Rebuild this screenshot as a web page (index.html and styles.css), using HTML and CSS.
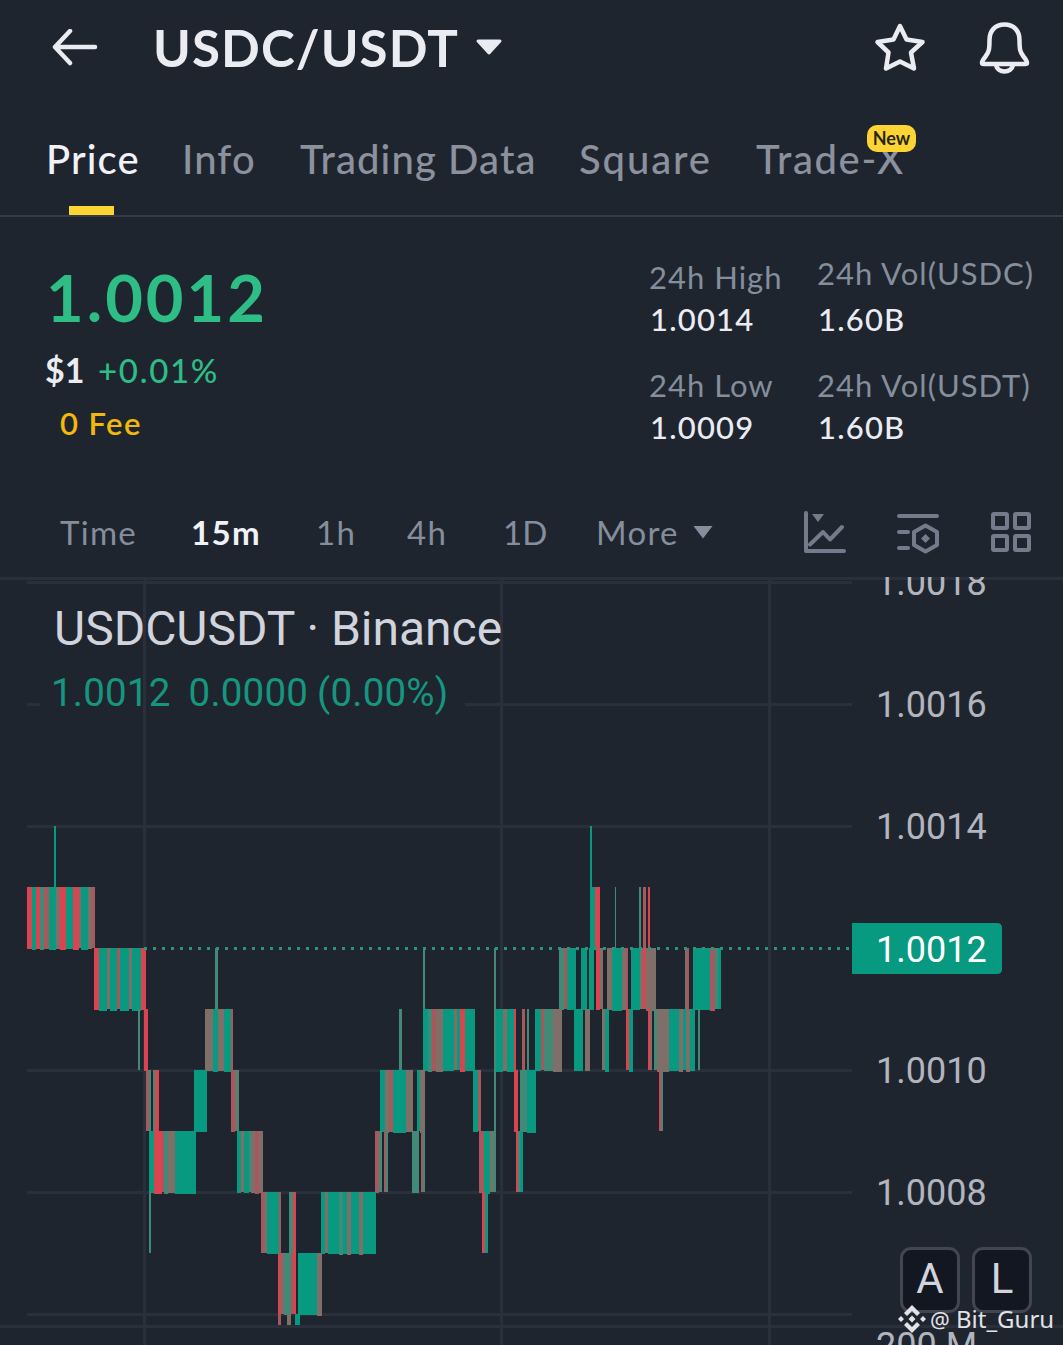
FILE: index.html
```html
<!DOCTYPE html>
<html lang="en">
<head>
    <meta charset="UTF-8">
    <meta name="viewport" content="width=device-width, initial-scale=1.0">
    <title>USDC/USDT</title>
    <link rel="stylesheet" href="styles.css">
</head>
<body>
    <header class="header">
        <svg class="back" width="46" height="38" viewBox="0 0 46 38">
            <path d="M18 2L3 18L18 34M3 18H43" />
        </svg>
        <h1 class="pair">USDC/USDT</h1>
        <svg class="pair-arrow" width="28" height="20" viewBox="0 0 28 20">
            <path d="M3 3H25L14 15Z" />
        </svg>
        <div class="header-icons">
            <svg width="54" height="54" viewBox="0 0 54 54">
                <path d="M27 6L33.500 19.500L49.500 22L38 32.500L41 48.500L27 41.500L13 48.500L15.500 32.500L4.500 22L20.500 19.500Z" />
            </svg>
            <svg width="54" height="56" viewBox="0 0 54 56">
                <path d="M26.500 4.500C17 4.500 11.500 11 11.500 20C11.500 29 11 32 7.500 36.500C5 39.500 4 41 4 43Q4 44 6 44H47Q49 44 49 43C49 41 48 39.500 45.500 36.500C42 32 41.500 29 41.500 20C41.500 11 36 4.500 26.500 4.500Z" />
                <path d="M18 45C19.500 53.500 33.500 53.500 35 45" />
            </svg>
        </div>
    </header>

    <nav class="tabs">
        <a class="active">Price</a>
        <a>Info</a>
        <a class="trading">Trading Data</a>
        <a class="square">Square</a>
        <a class="tradex">Trade-X<span class="badge">New</span></a>
    </nav>

    <section class="summary">
        <div class="price-block">
            <div class="price">1.0012</div>
            <div class="change"><span class="usd">$1</span><span class="percent">+0.01%</span></div>
            <div class="fee">0 Fee</div>
        </div>
        <div class="stats">
            <div class="stat">
                <div class="label">24h High</div>
                <div class="value">1.0014</div>
            </div>
            <div class="stat raised">
                <div class="label">24h Vol(USDC)</div>
                <div class="value">1.60B</div>
            </div>
            <div class="stat">
                <div class="label">24h Low</div>
                <div class="value">1.0009</div>
            </div>
            <div class="stat">
                <div class="label">24h Vol(USDT)</div>
                <div class="value">1.60B</div>
            </div>
        </div>
    </section>

    <div class="intervals">
        <a>Time</a>
        <a class="active">15m</a>
        <a>1h</a>
        <a>4h</a>
        <a class="day">1D</a>
        <a class="more">More
            <svg width="22" height="15" viewBox="0 0 22 15"><path d="M1.500 1H20.500L11 13.500Z" /></svg>
        </a>
        <div class="tools">
            <svg width="44" height="44" viewBox="0 0 44 44">
                <path d="M3 3V41H41M7 34.500L20 22L27 29.500L39 17" />
                <path class="solid" d="M9 4H21L15 12Z" />
            </svg>
            <svg width="44" height="44" viewBox="0 0 44 44">
                <path d="M3 6H41M3 22H12M3 38H12M29.500 15.500L41 22V35L29.500 41.500L18 35V22Z" />
                <path class="solid" d="M29.500 24L34 28.500L29.500 33L25 28.500Z" />
            </svg>
            <svg width="44" height="44" viewBox="0 0 44 44">
                <rect x="4" y="4" width="14" height="14" rx="1" />
                <rect x="26" y="4" width="14" height="14" rx="1" />
                <rect x="4" y="26" width="14" height="14" rx="1" />
                <rect x="26" y="26" width="14" height="14" rx="1" />
            </svg>
        </div>
    </div>

    <main class="chart">
        <svg width="1063" height="768" viewBox="0 577 1063 768">
            <g id="grid" class="grid"></g>
            <g id="candles" shape-rendering="crispEdges"></g>
            <path class="last-line" d="M144 948.500H852" />
            <rect class="text-mask" x="40" y="588" width="425" height="132" />
            <path class="grid-over" d="M144.500 588V720" />
            <g id="axis" class="axis"></g>
            <path class="last-tag" d="M852 923H997Q1002 923 1002 928V969Q1002 974 997 974H852Z" />
            <text class="last-text" x="876" y="962">1.0012</text>
        </svg>
        <div class="legend">
            <div class="legend-title">USDCUSDT · Binance</div>
            <div class="legend-values"><span>1.0012</span><span>0.0000</span><span>(0.00%)</span></div>
        </div>
        <div class="scale-buttons">
            <button>A</button>
            <button>L</button>
        </div>
        <div class="watermark">
            <svg width="28" height="28" viewBox="0 0 28 28">
                <path d="M14 0L22 8L19 11L14 6L9 11L6 8ZM14 28L22 20L19 17L14 22L9 17L6 20ZM3 11L6 14L3 17L0 14ZM25 11L28 14L25 17L22 14ZM14 10.500L17.500 14L14 17.500L10.500 14Z" />
            </svg>
            <span class="at">@</span>
            <span>Bit_Guru</span>
        </div>
    </main>

    <script src="chart.js"></script>
</body>
</html>
```
FILE: styles.css
```css
* {
    margin: 0;
    padding: 0;
    box-sizing: border-box;
}

body {
    width: 1063px;
    height: 1345px;
    overflow: hidden;
    background-color: #1f252f;
    color: #eaecf2;
    font-family: Lato, "Liberation Sans", sans-serif;
}

svg {
    display: block;
    fill: none;
}

.header {
    display: flex;
    align-items: center;
    height: 96px;
    padding: 0 31px 0 52px;
}

.header svg {
    stroke: #eaecf2;
    stroke-width: 4;
    stroke-linecap: round;
    stroke-linejoin: round;
}

.header .back,
.header-icons svg {
    stroke-width: 4.5;
}

.pair {
    width: 304px;
    margin-left: 55px;
    font-size: 51px;
    font-weight: 700;
    letter-spacing: 1.1px;
    line-height: 96px;
    white-space: nowrap;
}

.header .pair-arrow {
    margin-left: 18px;
    fill: #eaecf2;
    stroke-width: 3;
}

.header-icons {
    display: flex;
    gap: 51px;
    margin-left: auto;
}

.tabs {
    display: grid;
    grid-template-columns: 136px 118px 279px 177px 200px;
    height: 121px;
    padding: 36px 0 0 46px;
    border-bottom: 2px solid #333a45;
    font-size: 40px;
    font-weight: 500;
    letter-spacing: 1.1px;
    line-height: 55px;
    color: #8b919d;
    white-space: nowrap;
}

.tabs a {
    position: relative;
}

.tabs .square {
    letter-spacing: 1.9px;
}

.tabs .tradex {
    letter-spacing: 1.6px;
}

.tabs .active {
    color: #f0f2f7;
}

.tabs .active::after {
    content: "";
    position: absolute;
    left: 23px;
    bottom: 0;
    width: 45px;
    height: 9px;
    background-color: #fcd535;
}

.badge {
    position: absolute;
    left: 111px;
    top: -7px;
    width: 49px;
    height: 27px;
    border-radius: 10px;
    background-color: #fcd535;
    color: #29250f;
    font-size: 18px;
    font-weight: 700;
    letter-spacing: 0;
    line-height: 27px;
    text-align: center;
}

.summary {
    display: flex;
    justify-content: space-between;
    height: 273px;
    padding: 39px 0 0 46px;
}

.price {
    height: 84px;
    font-size: 65px;
    font-weight: 700;
    letter-spacing: 3px;
    line-height: 82px;
    color: #2ebd85;
}

.change {
    display: flex;
    height: 58px;
    line-height: 60px;
}

.usd {
    width: 53px;
    margin-left: -1px;
    font-size: 34px;
    font-weight: 700;
}

.percent {
    font-size: 33px;
    font-weight: 500;
    letter-spacing: 1.7px;
    color: #2ebd85;
}

.fee {
    padding-left: 14px;
    font-size: 31px;
    font-weight: 600;
    letter-spacing: 1.4px;
    line-height: 50px;
    color: #f0b90b;
}

.stats {
    display: grid;
    grid-template-columns: 168px 245px;
    grid-auto-rows: 84px;
    row-gap: 24px;
    font-size: 31px;
    letter-spacing: 1px;
    line-height: 42px;
    white-space: nowrap;
}

.stats .label {
    margin-left: -1px;
    color: #848e9c;
}

.stats .value {
    font-weight: 500;
    letter-spacing: 1.2px;
}

.raised .label {
    margin-top: -4px;
    margin-bottom: 4px;
}

.intervals {
    display: grid;
    grid-template-columns: 131px 125px 91px 96px 93px 207px 260px;
    height: 87px;
    padding-left: 60px;
    font-size: 33px;
    letter-spacing: 1.3px;
    line-height: 84px;
    color: #848e9c;
}

.intervals .active {
    color: #f0f2f7;
    font-weight: 700;
}

.intervals .day {
    letter-spacing: 0;
}

.more {
    display: flex;
    align-items: center;
    gap: 13px;
    height: 84px;
}

.more svg {
    fill: #848e9c;
}

.tools {
    display: flex;
    gap: 49px;
    padding-top: 20px;
}

.tools svg {
    stroke: #747b8b;
    stroke-width: 4;
    stroke-linecap: round;
    stroke-linejoin: round;
}

.tools .solid {
    fill: #747b8b;
    stroke: none;
}

.chart {
    position: relative;
    height: 768px;
    font-family: Roboto, sans-serif;
}

.grid,
.grid-over {
    stroke: #2a303b;
    stroke-width: 3;
}

.text-mask {
    fill: #1f252f;
}

.axis text {
    font-size: 36px;
    fill: #b2b5be;
}

.last-line {
    stroke: #2a947f;
    stroke-width: 3;
    stroke-dasharray: 3 6;
}

.last-tag {
    fill: #089981;
}

.last-text {
    font-size: 36px;
    fill: #fff;
}

.legend {
    position: absolute;
    left: 54px;
    top: 17px;
    white-space: nowrap;
}

.legend-title {
    font-size: 48px;
    line-height: 70px;
    color: #d1d4dc;
}

.legend-values {
    display: flex;
    gap: 18px;
    margin-left: -3px;
    font-size: 38.5px;
    letter-spacing: 0.2px;
    line-height: 58px;
    color: #16957f;
}

.legend-values span:last-child {
    margin-left: -9px;
}

.scale-buttons {
    position: absolute;
    left: 900px;
    top: 670px;
    display: flex;
    gap: 12px;
}

.scale-buttons button {
    width: 60px;
    height: 66px;
    padding-bottom: 3px;
    border: 3px solid #434651;
    border-radius: 11px;
    background-color: #131722;
    color: #d1d4dc;
    font-family: Roboto, sans-serif;
    font-size: 42px;
}

.watermark {
    position: absolute;
    left: 898px;
    top: 727px;
    display: flex;
    align-items: center;
    font-family: "Noto Sans", sans-serif;
    font-size: 24px;
    line-height: 30px;
    color: #e2e3e6;
}

.watermark svg {
    fill: #e2e3e6;
}

.at {
    width: 26px;
    margin-left: 4px;
    font-size: 22px;
}
```
FILE: chart.js
```javascript
const SVG_NS = 'http://www.w3.org/2000/svg';

const colors = {
    g: '#089981',
    t: '#428a78', // mostly green
    m: '#806f69', // mixed
    p: '#a8575d', // mostly red
    r: '#d94450'
};

// price step -> y (1.0018 at the top, 61px per 0.0001)
function priceY(step) {
    return 826 + (14 - step) * 61;
}

// [top price step, runs as "x color width color width ..."]
const rows = [
    [13, '27 r5 g4 r4 t4 p5 g7 m4 r6 g7 r6 m2 g7 m4 p3'],
    [13, '590 g5 r5'],
    [13, '615 t1'],
    [13, '639 t2'],
    [13, '643 p3'],
    [13, '648 r2'],
    [12, '94 r5 g8 m3 g7 p3 g9 m3 g9 r5'],
    [12, '215 t3'],
    [12, '423 t2'],
    [12, '494 t2'],
    [12, '559 t5 p3 g9'],
    [12, '581 g6'],
    [12, '589 g5'],
    [12, '596 r4 m3'],
    [12, '607 m5 g10 m4 p2'],
    [12, '631 g9 m3 r3 m10'],
    [12, '685 m2 p2'],
    [12, '693 g17 p5 t3 g3'],
    [11, '138 t2'],
    [11, '144 r4'],
    [11, '205 m8 g5 m6 g7 p2'],
    [11, '399 t3'],
    [11, '423 g5 t4 p4 m7 g11 m3 g3 r5 g10'],
    [11, '494 t2 g7 m4 g7 r2'],
    [11, '522 p3'],
    [11, '527 t2'],
    [11, '535 g6 p3 t9 m9'],
    [11, '574 g9'],
    [11, '585 m5'],
    [11, '602 m3 g4'],
    [11, '626 r3 g4'],
    [11, '648 r2 m2'],
    [11, '654 t3 m12 g10 m4 g3 m4 g5'],
    [11, '698 t2'],
    [10, '146 p3 t2'],
    [10, '153 t2 r4'],
    [10, '194 g13'],
    [10, '231 p4 m2 t2'],
    [10, '380 g5 m4 p4 g13 m7'],
    [10, '417 g3 m5'],
    [10, '473 g5 p3'],
    [10, '494 t2'],
    [10, '514 r4'],
    [10, '520 t7 g9'],
    [10, '659 r2 t2'],
    [9, '149 g5 r8 p2 t4 m7 g21'],
    [9, '237 g4 m3 g5 t2 m4 p4 m4'],
    [9, '375 p4 t3'],
    [9, '384 p2 t2'],
    [9, '412 t7'],
    [9, '421 p2 t2'],
    [9, '479 p5 g6 m3 t3'],
    [9, '516 r2 t2 g3'],
    [8, '149 t2'],
    [8, '261 p3 m3 g12 p2'],
    [8, '289 t4 r3'],
    [8, '321 g4 m3 g11 t4 g4 m4 g8 m4 g13'],
    [8, '482 r3 g3'],
    [7, '278 r3 m3 t7 p2 r3'],
    [7, '298 g19 m5']
];

// thin wicks: x, width, y, height, color
const wicks = [
    [54, 2, 826, 61, 'g'],
    [590, 2, 826, 61, 'g'],
    [278, 3, 1314, 11, 'p'],
    [287, 4, 1314, 11, 'm'],
    [295, 5, 1314, 11, 'g']
];

function add(parent, name, attrs, text) {
    const el = document.createElementNS(SVG_NS, name);
    for (const key in attrs) {
        el.setAttribute(key, attrs[key]);
    }
    if (text) {
        el.textContent = text;
    }
    parent.appendChild(el);
}

const grid = document.getElementById('grid');
const axis = document.getElementById('axis');
const candles = document.getElementById('candles');

[144.5, 501.5, 769.5].forEach(x => add(grid, 'path', { d: `M${x} 577V1345` }));
[582.5, 704.5, 826.5, 1070.5, 1192.5, 1314.5].forEach(y => add(grid, 'path', { d: `M27 ${y}H852` }));
[578.5, 1326.5].forEach(y => add(grid, 'path', { d: `M0 ${y}H1063` }));

['1.0018', '1.0016', '1.0014', '', '1.0010', '1.0008'].forEach((price, i) => {
    add(axis, 'text', { x: 876, y: 595 + i * 122 }, price);
});
add(axis, 'text', { x: 876, y: 1358 }, '200 M');

rows.forEach(([step, runs]) => {
    const parts = runs.split(' ');
    let x = Number(parts.shift());
    parts.forEach((part, i) => {
        const width = Number(part.slice(1));
        // small ticks stick out of the wider bodies
        const extra = width > 3 ? 1 + i % 2 : 0;
        add(candles, 'rect', { x, y: priceY(step), width, height: 61 + extra, fill: colors[part[0]] });
        x += width;
    });
});

wicks.forEach(([x, width, y, height, color]) => {
    add(candles, 'rect', { x, y, width, height, fill: colors[color] });
});
```
